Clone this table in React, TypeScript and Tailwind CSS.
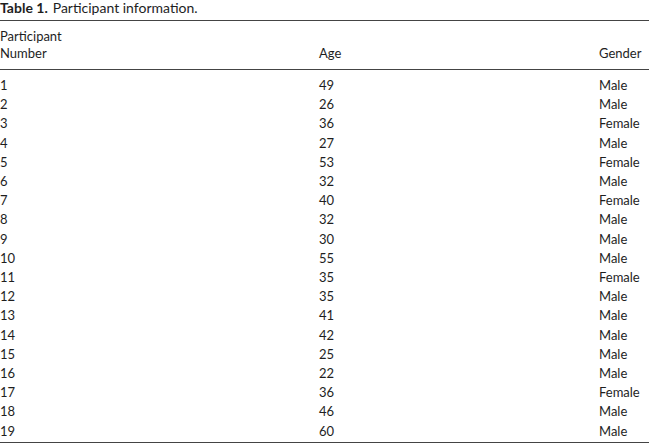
import React from "react";

const rows: [string, string, string][] = [
  ["1", "49", "Male"],
  ["2", "26", "Male"],
  ["3", "36", "Female"],
  ["4", "27", "Male"],
  ["5", "53", "Female"],
  ["6", "32", "Male"],
  ["7", "40", "Female"],
  ["8", "32", "Male"],
  ["9", "30", "Male"],
  ["10", "55", "Male"],
  ["11", "35", "Female"],
  ["12", "35", "Male"],
  ["13", "41", "Male"],
  ["14", "42", "Male"],
  ["15", "25", "Male"],
  ["16", "22", "Male"],
  ["17", "36", "Female"],
  ["18", "46", "Male"],
  ["19", "60", "Male"],
];

export default function App() {
  return (
    <div
      className="w-[649px] h-[445px] overflow-hidden bg-white text-[#1e1e1e]"
      style={{ fontFamily: "Lato, 'Open Sans', sans-serif" }}
    >
      <div className="text-[14px] leading-[15px] whitespace-nowrap">
        <span className="font-bold">Table 1.</span>
        <span className="ml-[5px]">Participant information.</span>
      </div>
      <div className="mt-[5px] h-px bg-[#444]" />
      <div className="grid grid-cols-[319px_280px_1fr] text-[13px] leading-[17px] pt-[7px] pb-[7px] items-end">
        <div>
          Participant
          <br />
          Number
        </div>
        <div>Age</div>
        <div className="whitespace-nowrap">Gender</div>
      </div>
      <div className="h-px bg-[#444]" />
      <div className="pt-[6px] text-[13px] leading-[19.2px]">
        {rows.map((r) => (
          <div key={r[0]} className="grid grid-cols-[319px_280px_1fr]">
            <div>{r[0]}</div>
            <div>{r[1]}</div>
            <div>{r[2]}</div>
          </div>
        ))}
      </div>
      <div className="mt-[1px] h-px bg-[#444]" />
    </div>
  );
}
